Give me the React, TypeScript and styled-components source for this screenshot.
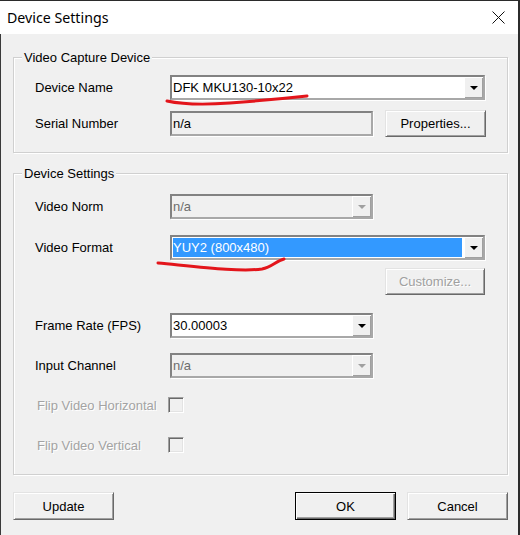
import React from 'react';
import styled, { createGlobalStyle } from 'styled-components';

const Global = createGlobalStyle`
  html, body { margin: 0; padding: 0; background: #f0f0f0; }
  body { font-family: "Liberation Sans", Arial, sans-serif; }
  * { box-sizing: border-box; }
`;

const Window = styled.div`
  position: relative;
  width: 520px;
  height: 535px;
  display: flex;
  flex-direction: column;
  background: #f0f0f0;
  border-top: 1px solid #2b2b2b;
  border-right: 2px solid #2b2b2b;
  overflow: hidden;
`;

const TitleBar = styled.div`
  height: 33px;
  flex: none;
  background: #ffffff;
  display: flex;
  align-items: center;
  justify-content: space-between;
  padding-left: 7px;
`;

const TitleText = styled.span`
  font-family: "Noto Sans", "Open Sans", sans-serif;
  font-size: 14.2px;
  color: #000;
  line-height: 20px;
`;

const CloseBox = styled.span`
  width: 40px;
  height: 33px;
  display: flex;
  align-items: center;
  justify-content: center;
`;

const Body = styled.div`
  flex: 1;
  display: flex;
  flex-direction: column;
  padding: 23px 10px 0 12px;
  border-left: 1px solid #3a3a3a;
`;

const Group = styled.div<{ $mt?: number; $pb: number }>`
  display: flex;
  flex-direction: column;
  margin-top: ${p => p.$mt ?? 0}px;
  padding: 0 22px ${p => p.$pb}px 21px;
  border: 1px solid #d0d0d0;
  box-shadow: 1px 1px 0 #ffffff, inset 1px 1px 0 #ffffff;
`;

const Caption = styled.span`
  align-self: flex-start;
  margin: -8px 0 0 -13px;
  padding: 0 2px;
  background: #f0f0f0;
  font-size: 13px;
  line-height: 15px;
  color: #000;
`;

const Row = styled.div<{ $mt: number; $h: number; $end?: boolean }>`
  display: flex;
  align-items: center;
  justify-content: ${p => (p.$end ? 'flex-end' : 'flex-start')};
  margin-top: ${p => p.$mt}px;
  height: ${p => p.$h}px;
`;

const Label = styled.span<{ $disabled?: boolean }>`
  width: 135px;
  flex: none;
  font-size: 13px;
  padding-left: ${p => (p.$disabled ? 2 : 0)}px;
  color: ${p => (p.$disabled ? '#a3a3a3' : '#000')};
  text-shadow: ${p => (p.$disabled ? '1px 1px 0 #ffffff' : 'none')};
  white-space: nowrap;
`;

const Sunken = styled.div<{ $w: number; $disabled?: boolean }>`
  width: ${p => p.$w}px;
  height: 25px;
  flex: none;
  display: flex;
  align-items: stretch;
  border: 2px solid;
  border-color: #828282 #a8a8a8 #a8a8a8 #828282;
  box-shadow: 1px 1px 0 #ffffff;
  background: ${p => (p.$disabled ? '#f0f0f0' : '#ffffff')};
`;

const FieldText = styled.span<{ $muted?: boolean }>`
  flex: 1;
  display: flex;
  align-items: center;
  padding-left: 1px;
  font-size: 13px;
  color: ${p => (p.$muted ? '#6d6d6d' : '#000')};
  white-space: nowrap;
`;

const Selected = styled.span`
  flex: 1;
  display: flex;
  align-items: center;
  margin: 1px 2px 1px 1px;
  padding-left: 0;
  background: #3399ff;
  color: #ffffff;
  font-size: 13px;
  white-space: nowrap;
`;

const ArrowBtn = styled.span`
  width: 19px;
  flex: none;
  display: flex;
  align-items: center;
  justify-content: center;
  background: #f0f0f0;
  box-shadow: inset 1px 1px 0 #ffffff, inset -1px -1px 0 #a0a0a0;
`;

const Arrow = styled.span<{ $disabled?: boolean }>`
  width: 0;
  height: 0;
  border-left: 4px solid transparent;
  border-right: 4px solid transparent;
  border-top: 4px solid ${p => (p.$disabled ? '#a0a0a0' : '#000')};
`;

const Button = styled.button<{ $w?: number; $h?: number; $default?: boolean; $ml?: number }>`
  width: ${p => p.$w ?? 101}px;
  height: ${p => p.$h ?? 27}px;
  flex: none;
  margin: 0 0 0 ${p => p.$ml ?? 0}px;
  padding: 0;
  font-family: "Liberation Sans", Arial, sans-serif;
  font-size: 13px;
  color: #000;
  background: #f0f0f0;
  border: 1px solid;
  border-color: ${p => (p.$default ? '#000 #000 #000 #000' : '#e3e3e3 #696969 #696969 #e3e3e3')};
  box-shadow: ${p =>
    p.$default
      ? 'inset 1px 1px 0 #ffffff, inset -1px -1px 0 #696969, inset -2px -2px 0 #a0a0a0'
      : 'inset 1px 1px 0 #ffffff, inset -1px -1px 0 #a0a0a0'};
  &:disabled {
    color: #a0a0a0;
    text-shadow: 1px 1px 0 #ffffff;
  }
`;

const Check = styled.span`
  width: 16px;
  height: 16px;
  flex: none;
  margin-left: -2px;
  background: #f0f0f0;
  border: 1px solid;
  border-color: #a0a0a0 #ffffff #ffffff #a0a0a0;
  box-shadow: inset 1px 1px 0 #696969, inset -1px -1px 0 #e3e3e3;
`;

const ButtonBar = styled.div`
  display: flex;
  align-items: center;
  margin-top: 17px;
`;

const Spacer = styled.span`
  flex: 1;
`;

const Marks = styled.svg`
  position: absolute;
  left: 0;
  top: 0;
  pointer-events: none;
`;

const Combo: React.FC<{ w: number; text: string; disabled?: boolean; selected?: boolean }> = ({
  w,
  text,
  disabled,
  selected,
}) => (
  <Sunken $w={w} $disabled={disabled}>
    {selected ? <Selected>{text}</Selected> : <FieldText $muted={disabled}>{text}</FieldText>}
    <ArrowBtn>
      <Arrow $disabled={disabled} />
    </ArrowBtn>
  </Sunken>
);

export default function App() {
  return (
    <>
      <Global />
      <Window>
        <TitleBar>
          <TitleText>Device Settings</TitleText>
          <CloseBox>
            <svg width="13" height="13" viewBox="0 0 13 13">
              <path d="M0.5 0.5 L12.5 12.5 M12.5 0.5 L0.5 12.5" stroke="#111" strokeWidth="1" fill="none" />
            </svg>
          </CloseBox>
        </TitleBar>
        <Body>
          <Group $pb={16}>
            <Caption>Video Capture Device</Caption>
            <Row $mt={10} $h={25}>
              <Label>Device Name</Label>
              <Combo w={315} text="DFK MKU130-10x22" />
            </Row>
            <Row $mt={11} $h={25}>
              <Label>Serial Number</Label>
              <Sunken $w={203} $disabled>
                <FieldText>n/a</FieldText>
              </Sunken>
              <Button $ml={12}>Properties...</Button>
            </Row>
          </Group>

          <Group $mt={20} $pb={21}>
            <Caption>Device Settings</Caption>
            <Row $mt={13} $h={25}>
              <Label>Video Norm</Label>
              <Combo w={203} text="n/a" disabled />
            </Row>
            <Row $mt={16} $h={25}>
              <Label>Video Format</Label>
              <Combo w={315} text="YUY2 (800x480)" selected />
            </Row>
            <Row $mt={8} $h={27} $end>
              <Button $w={100} disabled>
                Customize...
              </Button>
            </Row>
            <Row $mt={18} $h={25}>
              <Label>Frame Rate (FPS)</Label>
              <Combo w={203} text="30.00003" />
            </Row>
            <Row $mt={15} $h={25}>
              <Label>Input Channel</Label>
              <Combo w={203} text="n/a" disabled />
            </Row>
            <Row $mt={19} $h={16}>
              <Label $disabled>Flip Video Horizontal</Label>
              <Check />
            </Row>
            <Row $mt={24} $h={16}>
              <Label $disabled>Flip Video Vertical</Label>
              <Check />
            </Row>
          </Group>

          <ButtonBar>
            <Button $h={28}>Update</Button>
            <Spacer />
            <Button $h={28} $default>
              OK
            </Button>
            <Button $h={28} $ml={11}>
              Cancel
            </Button>
          </ButtonBar>
        </Body>
        <Marks width="520" height="535" viewBox="0 0 520 535">
          <path
            d="M167 100 Q 190 105 230 102 T 307 95"
            stroke="#e3151b"
            strokeWidth="3"
            fill="none"
            strokeLinecap="round"
          />
          <path
            d="M158 262 C 200 266 240 271 262 268 C 272 266 276 260 284 258"
            stroke="#e3151b"
            strokeWidth="3"
            fill="none"
            strokeLinecap="round"
          />
        </Marks>
      </Window>
    </>
  );
}
